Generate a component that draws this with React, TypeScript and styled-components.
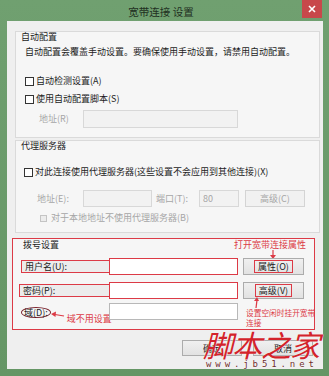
import styled, { createGlobalStyle } from "styled-components";

const GlobalStyle = createGlobalStyle`
  html, body {
    margin: 0;
    padding: 0;
    background: #6b9b6b;
  }
  body {
    font-family: "Noto Sans CJK SC", "Noto Sans", sans-serif;
    color: #1c1c1c;
  }
`;

const RED = "#dc3a46";
const FONT = `"Noto Sans CJK SC", "Noto Sans", sans-serif`;

const Window = styled.div`
  position: relative;
  width: 329px;
  height: 376px;
  background: linear-gradient(#70a070, #659665);
  display: flex;
  flex-direction: column;
  overflow: hidden;
`;

const TitleBar = styled.div`
  height: 21px;
  display: grid;
  grid-template-columns: 1fr auto 1fr;
  align-items: start;
  padding-right: 7px;
`;

const Title = styled.h1`
  grid-column: 2;
  margin: 0;
  font-size: 10.5px;
  font-weight: normal;
  line-height: 23px;
  color: #1f2f1f;
  white-space: pre;
`;

const Close = styled.div`
  grid-column: 3;
  justify-self: end;
  width: 20px;
  height: 18px;
  background: #c8484b;
  display: flex;
  align-items: center;
  justify-content: center;
`;

const Body = styled.div`
  flex: 1;
  margin: 0 6px 7px 7px;
  background: #efefef;
  padding: 10px 3px 0 8px;
  display: flex;
  flex-direction: column;
  position: relative;
`;

const Group = styled.section<{ $gap: number; $pb: number; $mark?: boolean }>`
  margin-top: ${(p) => p.$gap}px;
  padding-bottom: ${(p) => p.$pb}px;
  border: 1px solid ${(p) => (p.$mark ? RED : "#dadada")};
  background: #f6f6f6;
  display: flex;
  flex-direction: column;
  ${(p) => p.$mark && "margin-left: -3px; margin-right: 5px;"}
`;

const Row = styled.div<{ $top: number; $indent: number; $h?: number }>`
  margin-top: ${(p) => p.$top}px;
  padding-left: ${(p) => p.$indent}px;
  height: ${(p) => p.$h ?? 12}px;
  display: flex;
  align-items: center;
  font-size: 9px;
  line-height: 12px;
  white-space: nowrap;
  position: relative;
`;

const Caption = styled.span<{ $w?: number; $disabled?: boolean; $ml?: number }>`
  ${(p) => p.$w && `width: ${p.$w}px;`}
  margin-left: ${(p) => p.$ml ?? 0}px;
  color: ${(p) => (p.$disabled ? "#a6a6a6" : "#1c1c1c")};
  flex-shrink: 0;
`;

const Check = styled.span<{ $disabled?: boolean }>`
  width: ${(p) => (p.$disabled ? 7 : 9)}px;
  height: ${(p) => (p.$disabled ? 7 : 9)}px;
  box-sizing: border-box;
  border: 1px solid ${(p) => (p.$disabled ? "#c4c4c4" : "#333")};
  background: ${(p) => (p.$disabled ? "#ececec" : "#fff")};
  margin-right: ${(p) => (p.$disabled ? 4 : 2)}px;
  flex-shrink: 0;
`;

const Field = styled.div<{ $w: number; $disabled?: boolean; $mark?: boolean }>`
  width: ${(p) => p.$w}px;
  height: 100%;
  box-sizing: border-box;
  border: 1px solid
    ${(p) => (p.$mark ? RED : p.$disabled ? "#d8d8d8" : "#b8b8b8")};
  background: ${(p) => (p.$disabled ? "#f2f2f2" : "#fff")};
  color: #a6a6a6;
  padding-left: 3px;
  display: flex;
  align-items: center;
  flex-shrink: 0;
`;

const Button = styled.button<{ $w: number; $ml: number; $disabled?: boolean }>`
  width: ${(p) => p.$w}px;
  height: 17px;
  margin-left: ${(p) => p.$ml}px;
  padding: 0;
  box-sizing: border-box;
  border: 1px solid ${(p) => (p.$disabled ? "#d4d4d4" : "#acacac")};
  background: ${(p) =>
    p.$disabled ? "#f1f1f1" : "linear-gradient(#f0f0f0, #e2e2e2)"};
  color: ${(p) => (p.$disabled ? "#a6a6a6" : "#1c1c1c")};
  font-family: ${FONT};
  font-size: 9px;
  line-height: 11px;
  display: flex;
  align-items: center;
  justify-content: center;
  flex-shrink: 0;
`;

const Marked = styled.span`
  border: 1px solid ${RED};
  padding: 0 3px;
`;

const LabelCell = styled.div<{ $w?: number }>`
  width: ${(p) => p.$w ?? 88}px;
  height: 13px;
  box-sizing: border-box;
  border: 1px solid ${RED};
  border-right: none;
  background: #ececec;
  padding-left: 3px;
  display: flex;
  align-items: center;
  flex-shrink: 0;
`;

const Note = styled.span<{ $size?: number }>`
  color: ${RED};
  font-size: ${(p) => p.$size ?? 9}px;
  line-height: 10px;
`;

const HeadNote = styled.div`
  margin-left: auto;
  margin-right: 8px;
  position: relative;
`;

const DomainCell = styled.div`
  width: 88px;
  height: 100%;
  display: flex;
  align-items: flex-start;
  flex-shrink: 0;
`;

const Ellipse = styled.span`
  margin-top: 4px;
  border: 1px solid #7b2630;
  border-radius: 50%;
  padding: 0 2px;
  line-height: 9px;
`;

const DomainNote = styled(Note)`
  margin-top: 11px;
  margin-left: 2px;
`;

const SideNote = styled.div`
  align-self: flex-start;
  margin-top: 5px;
  margin-left: 8px;
  display: flex;
  flex-direction: column;
  position: relative;
`;

const Pointer = styled.svg`
  position: absolute;
  overflow: visible;
`;

const Footer = styled.div`
  margin-top: 10px;
  height: 16px;
  display: flex;
  justify-content: flex-end;
  gap: 11px;
  padding-right: 7px;
`;

const Watermark = styled.div`
  position: absolute;
  left: 196px;
  top: 306px;
  display: flex;
  flex-direction: column;
  align-items: flex-start;
  pointer-events: none;
`;

const Brand = styled.span`
  font-size: 30px;
  line-height: 34px;
  letter-spacing: -1px;
  color: #d3232b;
  font-style: italic;
  text-shadow: 0 0 1px #fff;
`;

const Site = styled.span`
  margin-left: 3px;
  margin-top: -1px;
  font-family: "DejaVu Sans Mono", monospace;
  font-size: 9px;
  line-height: 9px;
  letter-spacing: 3.9px;
  color: #6e2b2b;
  text-shadow: 0 0 1px #fff, 0 0 1px #fff;
`;

export default function App() {
  return (
    <>
      <GlobalStyle />
      <Window>
        <TitleBar>
          <Title>宽带连接 设置</Title>
          <Close>
            <svg width="8" height="8" viewBox="0 0 8 8">
              <path d="M1 1L7 7M7 1L1 7" stroke="#fff" strokeWidth="1.6" />
            </svg>
          </Close>
        </TitleBar>
        <Body>
          <Group $gap={0} $pb={9}>
            <Row $top={0} $indent={5} $h={10}>
              <Caption>自动配置</Caption>
            </Row>
            <Row $top={4} $indent={9}>
              <Caption>自动配置会覆盖手动设置。要确保使用手动设置，请禁用自动配置。</Caption>
            </Row>
            <Row $top={17} $indent={9}>
              <Check />
              <Caption>自动检测设置(A)</Caption>
            </Row>
            <Row $top={6} $indent={9}>
              <Check />
              <Caption>使用自动配置脚本(S)</Caption>
            </Row>
            <Row $top={5} $indent={23} $h={18}>
              <Caption $w={44} $disabled>地址(R)</Caption>
              <Field $w={155} $disabled />
            </Row>
          </Group>

          <Group $gap={2} $pb={8}>
            <Row $top={0} $indent={5} $h={10}>
              <Caption>代理服务器</Caption>
            </Row>
            <Row $top={15} $indent={8}>
              <Check />
              <Caption>对此连接使用代理服务器(这些设置不会应用到其他连接)(X)</Caption>
            </Row>
            <Row $top={12} $indent={21} $h={17}>
              <Caption $w={46} $disabled>地址(E):</Caption>
              <Field $w={69} $disabled />
              <Caption $w={43} $ml={4} $disabled>端口(T):</Caption>
              <Field $w={40} $disabled>80</Field>
              <Button $w={60} $ml={6} $disabled>高级(C)</Button>
            </Row>
            <Row $top={5} $indent={24}>
              <Check $disabled />
              <Caption $disabled>对于本地地址不使用代理服务器(B)</Caption>
            </Row>
          </Group>

          <Group $gap={5} $pb={9} $mark>
            <Row $top={0} $indent={10}>
              <Caption>拨号设置</Caption>
              <HeadNote>
                <Note>打开宽带连接属性</Note>
                <Pointer width="6" height="10" style={{ left: 36, top: 11 }}>
                  <path d="M3 0L3 6" stroke={RED} strokeWidth="1.2" />
                  <path d="M0 5L6 5L3 9Z" fill={RED} />
                </Pointer>
              </HeadNote>
            </Row>
            <Row $top={7} $indent={8} $h={17}>
              <LabelCell>用户名(U):</LabelCell>
              <Field $w={129} $mark />
              <Button $w={61} $ml={5}>
                <Marked>属性(O)</Marked>
              </Button>
            </Row>
            <Row $top={7} $indent={6} $h={17}>
              <LabelCell $w={90}>密码(P):</LabelCell>
              <Field $w={129} $mark />
              <Button $w={61} $ml={5}>
                <Marked>高级(V)</Marked>
              </Button>
            </Row>
            <Row $top={4} $indent={8} $h={17}>
              <DomainCell>
                <Ellipse>域(D):</Ellipse>
                <svg width="14" height="8" viewBox="0 0 14 8" style={{ marginTop: 8, flexShrink: 0 }}>
                  <path d="M4 3.5L13 5" stroke={RED} strokeWidth="1.2" />
                  <path d="M0 3L5 0.5L4.5 6Z" fill={RED} />
                </svg>
                <DomainNote>域不用设置</DomainNote>
              </DomainCell>
              <Field $w={129} />
              <SideNote>
                <Pointer width="6" height="11" style={{ left: 8, top: -11 }}>
                  <path d="M0 4L3 0L5 4Z" fill={RED} />
                  <path d="M3 3L2 11" stroke={RED} strokeWidth="1.2" />
                </Pointer>
                <Note $size={7.7}>设置空闲时挂开宽带</Note>
                <Note $size={7.7}>连接</Note>
              </SideNote>
            </Row>
          </Group>

          <Footer>
            <Button $w={60} $ml={0} style={{ height: 16 }}>确定</Button>
            <Button $w={60} $ml={0} style={{ height: 16 }}>取消</Button>
          </Footer>

          <Watermark>
            <Brand>脚本之家</Brand>
            <Site>www.jb51.net</Site>
          </Watermark>
        </Body>
      </Window>
    </>
  );
}
